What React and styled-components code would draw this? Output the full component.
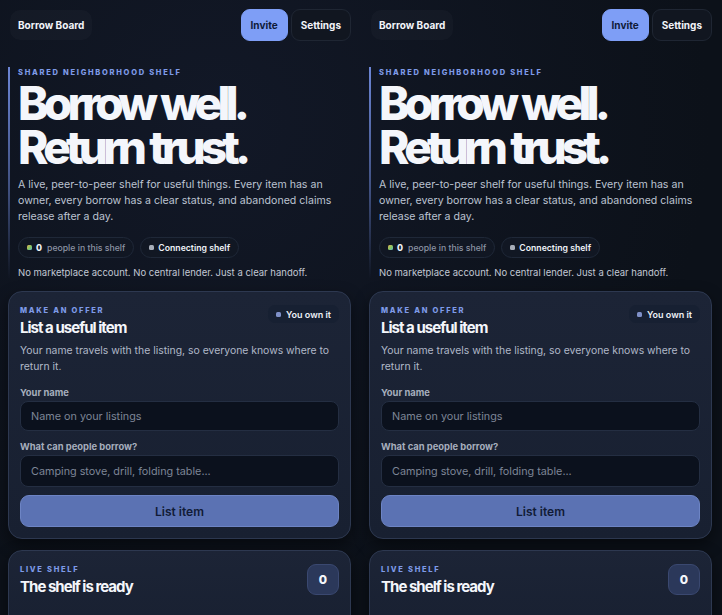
import React from "react";
import styled, { createGlobalStyle } from "styled-components";

const Global = createGlobalStyle`
  html, body {
    margin: 0;
    padding: 0;
    background: #0d121b;
  }
  body {
    font-family: Inter, "Noto Sans", "Liberation Sans", sans-serif;
    color: #eef1f7;
    -webkit-font-smoothing: antialiased;
  }
  * { box-sizing: border-box; }
`;

const Panel = () => {
  return (
    <Column>
      <TopBar>
        <Brand>Borrow Board</Brand>
        <Actions>
          <NavButton primary>Invite</NavButton>
          <NavButton>Settings</NavButton>
        </Actions>
      </TopBar>

      <Hero>
        <Eyebrow>Shared neighborhood shelf</Eyebrow>
        <Headline>
          Borrow well.
          <br />
          Return trust.
        </Headline>
        <Lead>
          A live, peer-to-peer shelf for useful things. Every item has an
          owner, every borrow has a clear status, and abandoned claims
          release after a day.
        </Lead>
        <PillRow>
          <Pill>
            <Dot tone="live" />
            <strong>0</strong>
            <Muted>people in this shelf</Muted>
          </Pill>
          <Pill>
            <Dot tone="idle" />
            <span>Connecting shelf</span>
          </Pill>
        </PillRow>
        <Note>No marketplace account. No central lender. Just a clear handoff.</Note>
      </Hero>

      <Card>
        <CardHead>
          <div>
            <Eyebrow>Make an offer</Eyebrow>
            <CardTitle>List a useful item</CardTitle>
          </div>
          <Badge>
            <Dot tone="own" />
            You own it
          </Badge>
        </CardHead>
        <CardText>
          Your name travels with the listing, so everyone knows where to
          return it.
        </CardText>
        <Field>
          <Label>Your name</Label>
          <Input placeholder="Name on your listings" />
        </Field>
        <Field>
          <Label>What can people borrow?</Label>
          <Input tall placeholder="Camping stove, drill, folding table..." />
        </Field>
        <Submit>List item</Submit>
      </Card>

      <Card open>
        <CardHead>
          <div>
            <Eyebrow>Live shelf</Eyebrow>
            <CardTitle>The shelf is ready</CardTitle>
          </div>
          <Count>0</Count>
        </CardHead>
      </Card>
    </Column>
  );
};

const App = () => {
  return (
    <>
      <Global />
      <Page>
        <Panel />
        <Panel />
      </Page>
    </>
  );
};

export default App;

const Page = styled.div`
  display: grid;
  grid-template-columns: 361px 361px;
  height: 615px;
  overflow: hidden;
  background: radial-gradient(circle at 30% 20%, #121827 0%, #0c1119 70%);
`;

const Column = styled.div`
  padding: 9px 10px 0 8px;
  display: flex;
  flex-direction: column;
`;

const TopBar = styled.div`
  display: flex;
  align-items: center;
  justify-content: space-between;
  height: 32px;
  padding-left: 2px;
`;

const Brand = styled.div`
  font-size: 10px;
  font-weight: 700;
  padding: 9px 8px;
  border-radius: 10px;
  background: rgba(255, 255, 255, 0.025);
  color: #f3f5fa;
`;

const Actions = styled.div`
  display: flex;
  gap: 3px;
`;

const NavButton = styled.button`
  height: 32px;
  padding: 0 9px;
  border-radius: 9px;
  font-family: inherit;
  font-size: 10px;
  font-weight: 700;
  border: 1px solid ${(p) => (p.primary ? "#7e9ef6" : "#1f2633")};
  background: ${(p) => (p.primary ? "#7e9ef6" : "#111620")};
  color: ${(p) => (p.primary ? "#0f1a38" : "#f1f3f8")};
`;

const Hero = styled.div`
  margin-top: 26px;
  padding-left: 8px;
  border-left: 2px solid transparent;
  border-image: linear-gradient(to bottom, #6c86d6 0%, rgba(108, 134, 214, 0.5) 60%, rgba(108, 134, 214, 0) 100%) 1;
`;

const Eyebrow = styled.div`
  font-size: 7.5px;
  font-weight: 800;
  letter-spacing: 0.23em;
  text-transform: uppercase;
  color: #7f9be8;
  padding-top: 1px;
`;

const Headline = styled.h1`
  margin: 4px 0 0;
  font-size: 46px;
  line-height: 44px;
  font-weight: 800;
  letter-spacing: -0.105em;
  word-spacing: 0.04em;
  color: #f4f6fb;
`;

const Lead = styled.p`
  margin: 8px 0 0;
  font-size: 10.6px;
  line-height: 16px;
  color: #bcc3d1;
  max-width: 320px;
`;

const PillRow = styled.div`
  display: flex;
  gap: 6px;
  margin-top: 12px;
`;

const Pill = styled.div`
  display: flex;
  align-items: center;
  gap: 4px;
  height: 21px;
  padding: 0 8px;
  border-radius: 11px;
  border: 1px solid #1f2838;
  background: #111723;
  font-size: 8.7px;
  font-weight: 600;
  color: #eef1f7;

  strong {
    font-weight: 800;
    margin-right: 1px;
  }
`;

const Muted = styled.span`
  color: #8c94a4;
  font-weight: 500;
`;

const Dot = styled.span`
  width: 5px;
  height: 5px;
  border-radius: 1.5px;
  background: ${(p) =>
    p.tone === "live"
      ? "linear-gradient(135deg, #e2b04d 0%, #7ec86c 60%, #5ea6d8 100%)"
      : p.tone === "own"
      ? "#7f90c8"
      : "#a7adb8"};
`;

const Note = styled.p`
  margin: 9px 0 0;
  font-size: 9.5px;
  color: #c2c8d4;
`;

const Card = styled.section`
  margin-top: 13px;
  padding: 13px 11px 11px;
  min-height: ${(p) => (p.open ? "90px" : "0")};
  flex-shrink: 0;
  border-radius: 14px;
  border: 1px solid #2d3850;
  background: linear-gradient(180deg, #1c2436 0%, #182031 100%);
  box-shadow: 0 6px 16px rgba(0, 0, 0, 0.45);

  & + & {
    margin-top: 11px;
  }
`;

const CardHead = styled.div`
  display: flex;
  justify-content: space-between;
  align-items: flex-start;
`;

const CardTitle = styled.h2`
  margin: 3px 0 0;
  font-size: 15px;
  font-weight: 700;
  letter-spacing: -0.065em;
  color: #f4f6fb;
`;

const Badge = styled.div`
  display: flex;
  align-items: center;
  gap: 5px;
  height: 18px;
  padding: 0 8px;
  border-radius: 7px;
  background: #172032;
  font-size: 9px;
  font-weight: 600;
  color: #eef1f7;
`;

const CardText = styled.p`
  margin: 6px 0 0;
  font-size: 10.4px;
  line-height: 16px;
  color: #b0b8c8;
`;

const Field = styled.div`
  margin-top: 12px;
  display: flex;
  flex-direction: column;

  & + & {
    margin-top: 10px;
  }
`;

const Label = styled.label`
  font-size: 9.4px;
  font-weight: 700;
  color: #a6aebd;
  margin-bottom: 3px;
`;

const Input = styled.input`
  height: ${(p) => (p.tall ? "32px" : "30px")};
  border-radius: 8px;
  border: 1px solid #242e42;
  background: #0b111d;
  padding: 0 10px;
  font-family: inherit;
  font-size: 10.8px;
  color: #eef1f7;

  &::placeholder {
    color: #7d8596;
  }
`;

const Submit = styled.button`
  margin-top: 8px;
  width: 100%;
  height: 32px;
  border-radius: 9px;
  border: 1px solid #6d84c4;
  background: #5b72b3;
  font-family: inherit;
  font-size: 12px;
  font-weight: 600;
  color: #111b36;
`;

const Count = styled.div`
  width: 32px;
  height: 31px;
  border-radius: 9px;
  border: 1px solid #3a4870;
  background: #2b385a;
  display: flex;
  align-items: center;
  justify-content: center;
  font-size: 12px;
  font-weight: 800;
  color: #f4f6fb;
`;
